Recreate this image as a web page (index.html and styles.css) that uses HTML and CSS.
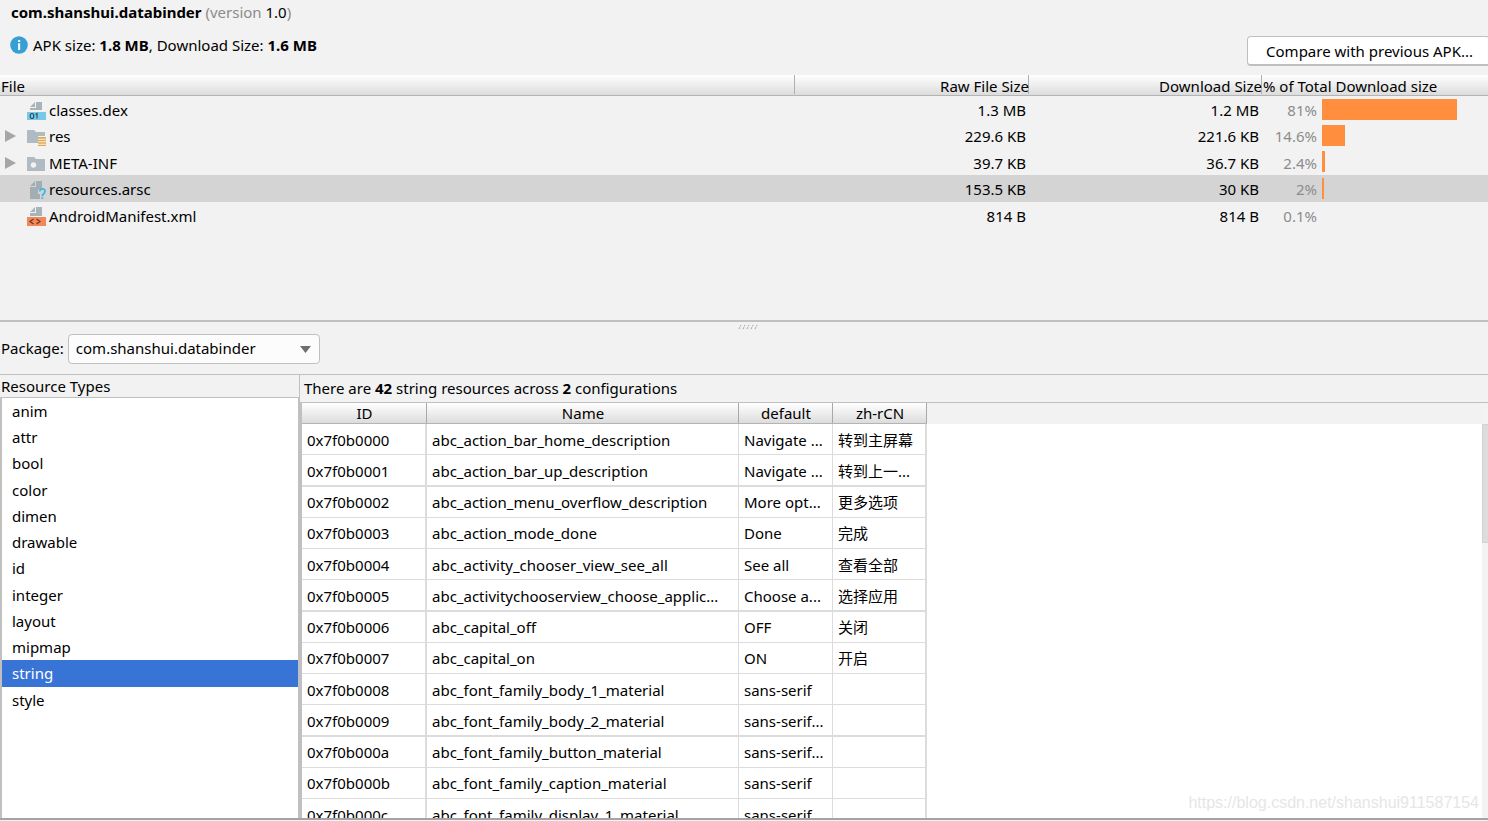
FILE: index.html
```html
<!DOCTYPE html>
<html lang="en">
<head>
<meta charset="utf-8">
<title>APK Analyzer</title>
<link rel="stylesheet" href="styles.css">
</head>
<body>
<header class="summary">
  <div class="app-info">
    <h1 class="app-id">com.shanshui.databinder <span class="version"><span class="muted">(version</span> 1.0<span class="muted">)</span></span></h1>
    <p class="sizes">
      <svg class="info-icon" width="18" height="18" viewBox="0 0 18 18" aria-hidden="true"><circle cx="9" cy="9" r="8.8" fill="#389fd6"/><path d="M8 4h2.2v2H8zM8 7.3h2.2V14H8z" fill="#f2f2f2"/></svg>
      <span>APK size: <b>1.8 MB</b>, Download Size: <b>1.6 MB</b></span>
    </p>
  </div>
  <button class="compare" type="button">Compare with previous APK...</button>
</header>

<section class="files">
  <table class="file-table">
    <colgroup><col><col class="c-raw"><col class="c-download"><col class="c-share"></colgroup>
    <thead>
      <tr><th>File</th><th class="num">Raw File Size</th><th class="num">Download Size</th><th>% of Total Download size</th></tr>
    </thead>
    <tbody>
      <tr>
        <td><div class="file"><span class="toggle"></span>
          <svg class="file-icon" width="20" height="20" viewBox="0 0 20 20" aria-hidden="true"><path d="M8 2v5H3zM9 2h6v8H3V8h6z" fill="#a9b3ba"/><path d="M0 12h19v8H0z" fill="#76c9e8"/><path d="M5 13.500c-2.400 0-2.400 5 0 5s2.400-5 0-5zM8.500 14.500l1.500-1v5" fill="none" stroke="#32505e" stroke-width="1.200"/></svg>
          <span>classes.dex</span></div></td>
        <td class="num">1.3 MB</td><td class="num">1.2 MB</td>
        <td><div class="share"><span class="percent">81%</span><span class="bar" style="width:135px"></span></div></td>
      </tr>
      <tr>
        <td><div class="file"><button class="toggle" type="button" aria-label="Expand res"><svg width="11" height="12" viewBox="0 0 11 12"><path d="M0 0l11 6-11 6z" fill="#a6a6a6"/></svg></button>
          <svg class="file-icon" width="20" height="20" viewBox="0 0 20 20" aria-hidden="true"><path d="M0 4h7l2 2h9v4h-7v7H0z" fill="#b0bac2"/><path d="M11 11h8v1.700h-8zM11 13.700h8v1.500h-8zM11 16.200h8v1.500h-8zM11 18.700h8V20h-8z" fill="#dfab4d"/></svg>
          <span>res</span></div></td>
        <td class="num">229.6 KB</td><td class="num">221.6 KB</td>
        <td><div class="share"><span class="percent">14.6%</span><span class="bar" style="width:23px"></span></div></td>
      </tr>
      <tr class="tall">
        <td><div class="file"><button class="toggle" type="button" aria-label="Expand META-INF"><svg width="11" height="12" viewBox="0 0 11 12"><path d="M0 0l11 6-11 6z" fill="#a6a6a6"/></svg></button>
          <svg class="file-icon" width="20" height="20" viewBox="0 0 20 20" aria-hidden="true"><path d="M0 4h7l2 2h9v12H0z" fill="#b0bac2"/><circle cx="6.500" cy="12" r="2.700" fill="#f2f2f2"/></svg>
          <span>META-INF</span></div></td>
        <td class="num">39.7 KB</td><td class="num">36.7 KB</td>
        <td><div class="share"><span class="percent">2.4%</span><span class="bar" style="width:3px"></span></div></td>
      </tr>
      <tr class="tall selected">
        <td><div class="file"><span class="toggle"></span>
          <svg class="file-icon" width="20" height="20" viewBox="0 0 20 20" aria-hidden="true"><path d="M8 2v5H3zM9 2h6v7l-4 2v4h2v5H3V8h6z" fill="#a3adb4"/><path d="M12.700 12.500c.3-3.600 5.300-3.300 5.300 0 0 2.300-2.700 2.300-2.700 4.800M15.300 18.200v1.800" fill="none" stroke="#40b6e0" stroke-width="1.800"/></svg>
          <span>resources.arsc</span></div></td>
        <td class="num">153.5 KB</td><td class="num">30 KB</td>
        <td><div class="share"><span class="percent">2%</span><span class="bar" style="width:2px"></span></div></td>
      </tr>
      <tr>
        <td><div class="file"><span class="toggle"></span>
          <svg class="file-icon" width="20" height="20" viewBox="0 0 20 20" aria-hidden="true"><path d="M8 1v5H3zM9 1h6v9H3V7h6z" fill="#a9b3ba"/><path d="M0 11h19v9H0z" fill="#f4875a"/><path d="M6.500 13l-3.500 2.500 3.500 2.500M9.500 13l3.500 2.500-3.500 2.500" fill="none" stroke="#6b3a26" stroke-width="1.300"/></svg>
          <span>AndroidManifest.xml</span></div></td>
        <td class="num">814 B</td><td class="num">814 B</td>
        <td><div class="share"><span class="percent">0.1%</span></div></td>
      </tr>
    </tbody>
  </table>
</section>

<div class="splitter"><svg width="20" height="6" viewBox="0 0 20 6" aria-hidden="true"><path d="M1 5l2-4M5 5l2-4M9 5l2-4M13 5l2-4M17 5l2-4" stroke="#b4b4b4" stroke-width="1.300" stroke-dasharray="2 1"/></svg></div>

<div class="package">
  <label for="package">Package:</label>
  <div class="combo">
    <select id="package"><option>com.shanshui.databinder</option></select>
    <svg class="combo-arrow" width="11" height="7" viewBox="0 0 11 7" aria-hidden="true"><path d="M0 0h11L5.500 7z" fill="#6e6e6e"/></svg>
  </div>
</div>

<main class="resources">
  <section class="types">
    <h2 class="types-title">Resource Types</h2>
    <ul class="type-list">
      <li><button type="button">anim</button></li>
      <li><button type="button">attr</button></li>
      <li><button type="button">bool</button></li>
      <li><button type="button">color</button></li>
      <li><button type="button">dimen</button></li>
      <li><button type="button">drawable</button></li>
      <li><button type="button">id</button></li>
      <li><button type="button">integer</button></li>
      <li><button type="button">layout</button></li>
      <li><button type="button">mipmap</button></li>
      <li><button type="button" class="current" aria-pressed="true">string</button></li>
      <li><button type="button">style</button></li>
    </ul>
  </section>
  <section class="strings">
    <p class="count">There are <b>42</b> string resources across <b>2</b> configurations</p>
    <div class="grid-area">
      <div class="grid-view">
        <table class="grid">
          <colgroup><col class="g-id"><col class="g-name"><col class="g-value"><col class="g-value"></colgroup>
          <thead><tr><th>ID</th><th>Name</th><th>default</th><th>zh-rCN</th></tr></thead>
          <tbody>
            <tr><td>0x7f0b0000</td><td>abc_action_bar_home_description</td><td>Navigate ...</td><td>转到主屏幕</td></tr>
            <tr><td>0x7f0b0001</td><td>abc_action_bar_up_description</td><td>Navigate ...</td><td>转到上一...</td></tr>
            <tr><td>0x7f0b0002</td><td>abc_action_menu_overflow_description</td><td>More opt...</td><td>更多选项</td></tr>
            <tr><td>0x7f0b0003</td><td>abc_action_mode_done</td><td>Done</td><td>完成</td></tr>
            <tr><td>0x7f0b0004</td><td>abc_activity_chooser_view_see_all</td><td>See all</td><td>查看全部</td></tr>
            <tr><td>0x7f0b0005</td><td>abc_activitychooserview_choose_applic...</td><td>Choose a...</td><td>选择应用</td></tr>
            <tr><td>0x7f0b0006</td><td>abc_capital_off</td><td>OFF</td><td>关闭</td></tr>
            <tr><td>0x7f0b0007</td><td>abc_capital_on</td><td>ON</td><td>开启</td></tr>
            <tr><td>0x7f0b0008</td><td>abc_font_family_body_1_material</td><td>sans-serif</td><td></td></tr>
            <tr><td>0x7f0b0009</td><td>abc_font_family_body_2_material</td><td>sans-serif...</td><td></td></tr>
            <tr><td>0x7f0b000a</td><td>abc_font_family_button_material</td><td>sans-serif...</td><td></td></tr>
            <tr><td>0x7f0b000b</td><td>abc_font_family_caption_material</td><td>sans-serif</td><td></td></tr>
            <tr><td>0x7f0b000c</td><td>abc_font_family_display_1_material</td><td>sans-serif</td><td></td></tr>
          </tbody>
        </table>
      </div>
      <div class="scrollbar"><div class="thumb"></div></div>
    </div>
    <span class="watermark">https://blog.csdn.net/shanshui911587154</span>
  </section>
</main>
</body>
</html>
```
FILE: styles.css
```css
* { box-sizing: border-box; }

body {
  margin: 0;
  height: 100vh;
  display: flex;
  flex-direction: column;
  overflow: hidden;
  background: #f2f2f2;
  color: #000;
  font: 15px/20px "Noto Sans", "Noto Sans CJK SC", sans-serif;
}

button, select { font: inherit; color: inherit; }
h1, h2, p, ul { margin: 0; padding: 0; font-size: inherit; }
ul { list-style: none; }
table { border-collapse: separate; border-spacing: 0; table-layout: fixed; }
th, td { padding: 0; font-weight: 400; text-align: left; white-space: nowrap; }

.muted { color: #8c8c8c; }

.summary {
  display: flex;
  justify-content: space-between;
  align-items: flex-end;
  padding: 2px 0 9px;
}
.app-info { padding: 0 0 11px 10px; }
.app-id { padding-left: 1px; }
.version { font-weight: 400; }
.sizes { display: flex; align-items: center; gap: 5px; margin-top: 13px; }
.compare {
  height: 30px;
  margin-right: -2px;
  padding: 0 16px 0 18px;
  border: 1px solid #bfbfbf;
  border-bottom-width: 2px;
  border-radius: 4px;
  background: #fff;
  white-space: nowrap;
}

.files { flex: none; height: 247px; border-bottom: 2px solid #c0c0c0; }
.file-table { width: 100%; }
.c-raw { width: 234px; }
.c-download { width: 233px; }
.c-share { width: 226px; }
.num { text-align: right; }
.file-table th {
  height: 21px;
  padding-top: 2px;
  line-height: 18px;
  border-bottom: 1px solid #b4b4b4;
  background:
    linear-gradient(#b0b0b0, #b0b0b0) right top / 1px 19px no-repeat,
    linear-gradient(#fff, #dcdcdc);
}
.file-table th:first-child { padding-left: 1px; }
.file-table th:last-child { padding-left: 1px; background: linear-gradient(#fff, #dcdcdc); }
.file-table td { height: 26px; }
.file-table td.num { padding: 2px 3px 0 0; }
.file-table .tall td { height: 27px; }
.file-table .selected td { background: #d4d4d4; }
.file-table .selected td.num { padding-top: 0; }
.file { display: flex; align-items: center; padding: 2px 0 0 5px; }
.toggle {
  display: flex;
  width: 22px;
  padding: 0;
  border: 0;
  background: none;
}
.file-icon { flex: none; margin-right: 2px; }
.share { display: flex; align-items: center; gap: 5px; }
.percent { width: 55px; padding-top: 2px; text-align: right; color: #8c8c8c; }
.selected .file, .selected .percent { padding-top: 0; }
.bar { height: 21px; background: #ff8f3f; }

.splitter { display: flex; justify-content: center; height: 10px; padding: 2px 0 0 8px; }

.package {
  display: flex;
  align-items: center;
  gap: 4px;
  padding: 2px 0 10px 1px;
}
.package label { padding-bottom: 2px; }
.combo { position: relative; width: 252px; }
.combo select {
  display: block;
  appearance: none;
  width: 100%;
  height: 30px;
  padding: 0 28px 2px 7px;
  border: 1px solid #c0c0c0;
  border-radius: 4px;
  background: #fcfcfc;
}
.combo-arrow { position: absolute; right: 9px; top: 12px; pointer-events: none; }

.resources {
  flex: 1;
  min-height: 0;
  display: flex;
  margin-bottom: 1px;
  border-top: 1px solid #c0c0c0;
  border-bottom: 2px solid #a4a4a4;
}
.types { flex: none; width: 300px; display: flex; flex-direction: column; border-right: 1px solid #c0c0c0; }
.types-title { height: 22px; padding: 1px; font-weight: 400; }
.type-list {
  flex: 1;
  border: solid #c0c0c0;
  border-width: 1px 1px 0 2px;
  background: #fff;
}
.type-list button {
  display: block;
  width: 100%;
  height: 26px;
  padding: 0 10px;
  border: 0;
  background: none;
  text-align: left;
}
.type-list li:nth-child(4n+3) button { height: 27px; padding-bottom: 1px; }
.type-list .current { background: #3874d6; color: #fff; }

.strings { position: relative; flex: 1; min-width: 0; display: flex; flex-direction: column; }
.count { height: 27px; padding: 3px 4px; }
.grid-area {
  flex: 1;
  min-height: 0;
  display: flex;
  border-top: 1px solid #c0c0c0;
  border-left: 2px solid #c0c0c0;
}
.grid-view {
  flex: 1;
  overflow: hidden;
  background: linear-gradient(#f2f2f2, #f2f2f2) top / 100% 21px no-repeat #fff;
}
.grid { width: 625px; }
.g-id { width: 125px; }
.g-name { width: 312px; }
.g-value { width: 94px; }
.grid th {
  height: 21px;
  border-bottom: 1px solid #b4b4b4;
  background:
    linear-gradient(#a8a8a8, #a8a8a8) right top / 1px 20px no-repeat,
    linear-gradient(#fff, #dcdcdc);
  text-align: center;
}
.grid td {
  height: 31px;
  padding: 2px 0 0 5px;
  border: solid #dcdcdc;
  border-width: 0 1px 1px 0;
}
.grid tr:nth-child(4n+2) td { height: 32px; border-bottom-width: 2px; }
.grid tr:nth-child(4n+3) td, .grid tr:nth-child(4n) td { padding-top: 0; }
.grid td:first-child, .grid td:last-child { border-right-width: 2px; }
.scrollbar { width: 6px; padding-top: 21px; background: #f3f3f3; }
.thumb { height: 119px; border: 1px solid #d2d2d2; border-right: 0; background: #dcdcdc; }
.watermark {
  position: absolute;
  right: 9px;
  bottom: 5px;
  color: #e6e6e6;
  font: 16px/20px "Liberation Sans", sans-serif;
}
```
